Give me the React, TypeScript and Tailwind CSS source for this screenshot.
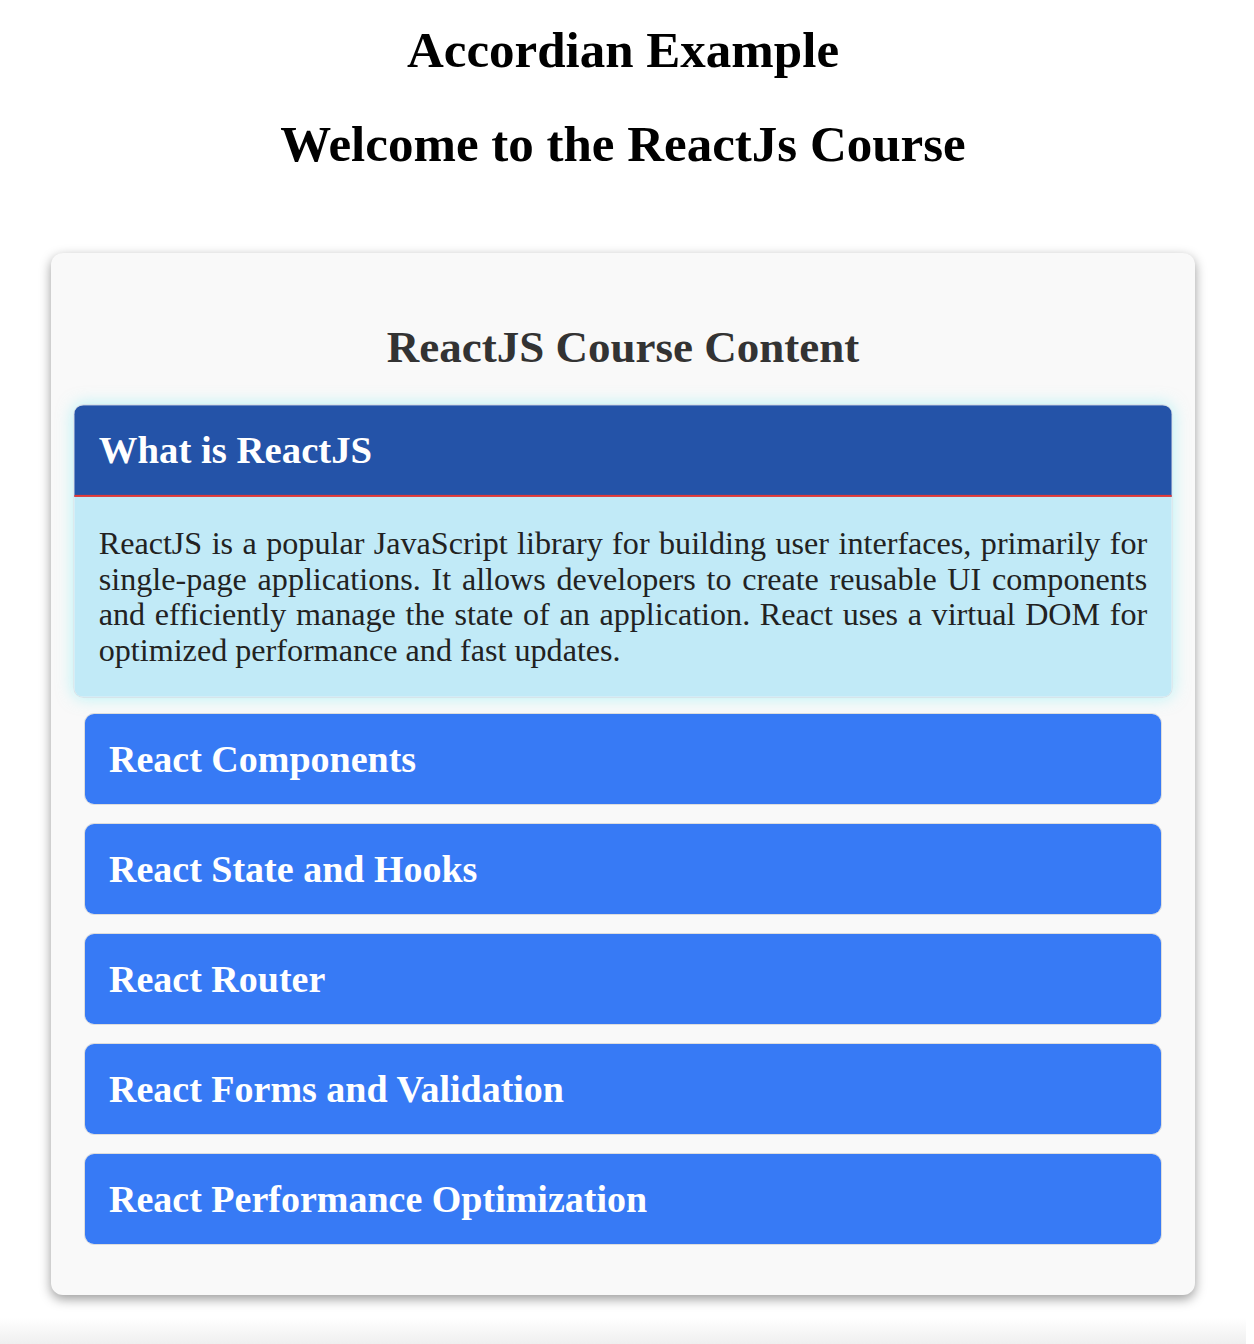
import { useState } from 'react';

const topics = [
  {
    title: 'What is ReactJS',
    body: 'ReactJS is a popular JavaScript library for building user interfaces, primarily for single-page applications. It allows developers to create reusable UI components and efficiently manage the state of an application. React uses a virtual DOM for optimized performance and fast updates.',
  },
  {
    title: 'React Components',
    body: 'Components are the building blocks of a React application. They can be written as functions or classes and accept props to render dynamic content.',
  },
  {
    title: 'React State and Hooks',
    body: 'State lets a component remember data between renders. Hooks such as useState and useEffect bring state and side effects to function components.',
  },
  {
    title: 'React Router',
    body: 'React Router enables navigation between views in a single-page application without reloading the page.',
  },
  {
    title: 'React Forms and Validation',
    body: 'Controlled components keep form inputs in React state, which makes validation and submission easy to manage.',
  },
  {
    title: 'React Performance Optimization',
    body: 'Memoization, code splitting and lazy loading help keep React applications fast as they grow.',
  },
];

export default function App() {
  const [open, setOpen] = useState<number | null>(0);

  return (
    <div className="min-h-[1344px] bg-white pr-[8px] font-['Liberation_Serif','Times_New_Roman',serif]">
      <h1 className="pt-[21px] text-center text-[51px] font-bold leading-[1.15] text-black">
        Accordian Example
      </h1>
      <h1 className="mt-[35px] text-center text-[51px] font-bold leading-[1.15] text-black">
        Welcome to the ReactJs Course
      </h1>

      <div className="mx-[51px] mt-[80px] rounded-xl bg-[#f9f9f9] px-[33px] pb-[32px] pt-[32px] shadow-[0_4px_12px_rgba(0,0,0,0.4)]">
        <h2 className="mb-[33px] mt-[37px] text-center text-[45px] font-bold leading-[1.15] text-[#333]">
          ReactJS Course Content
        </h2>

        {topics.map((t, i) => {
          const isOpen = open === i;
          return (
            <div
              key={t.title}
              className={
                isOpen
                  ? 'mb-[18px] scale-[1.02] overflow-hidden rounded-[10px] border border-[#d6e4ea] shadow-[0_0_16px_rgba(120,240,245,0.5)]'
                  : 'mb-[18px] overflow-hidden rounded-[10px] border border-[#dddddd]'
              }
            >
              <button
                onClick={() => setOpen(isOpen ? null : i)}
                className={
                  isOpen
                    ? 'block w-full border-b-2 border-[#e53935] bg-[#2453a8] px-6 py-6 text-left text-[38px] font-bold leading-[40px] text-white'
                    : 'block w-full bg-[#377af5] px-6 py-6 text-left text-[38px] font-bold leading-[42px] text-white'
                }
              >
                {t.title}
              </button>
              {isOpen && (
                <div className="bg-[#c1eaf7] px-6 py-[28px] text-justify text-[31.5px] leading-[35px] text-[#222]">
                  {t.body}
                </div>
              )}
            </div>
          );
        })}
      </div>

      <div className="mt-[23px] h-[26px] bg-gradient-to-b from-white to-[#efefef]" />
    </div>
  );
}
